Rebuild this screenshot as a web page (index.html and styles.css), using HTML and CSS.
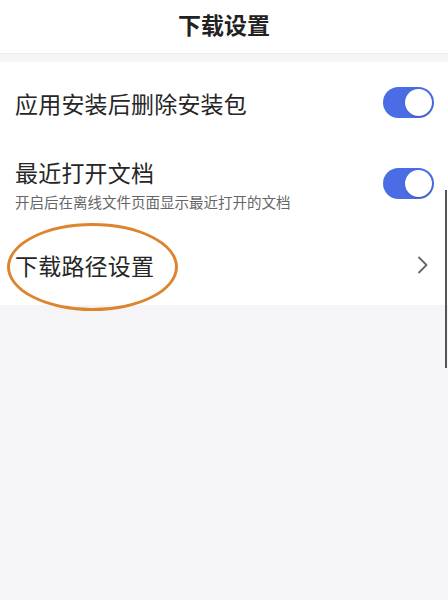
FILE: index.html
```html
<!DOCTYPE html>
<html lang="zh-CN">
<head>
<meta charset="utf-8">
<link rel="stylesheet" href="styles.css">
</head>
<body>
<header class="topbar"><h1 class="title">下载设置</h1></header>
<section class="card">
  <div class="row">
    <div class="label">应用安装后删除安装包</div>
    <div class="switch"><span class="knob"></span></div>
  </div>
  <div class="row row-two">
    <div class="texts">
      <div class="label">最近打开文档</div>
      <div class="sub">开启后在离线文件页面显示最近打开的文档</div>
    </div>
    <div class="switch"><span class="knob"></span></div>
  </div>
  <div class="row row-link">
    <div class="label">下载路径设置</div>
    <svg class="chev" width="12" height="18" viewBox="0 0 12 18"><path d="M2 1.5 L9.5 9 L2 16.5" fill="none" stroke="#666" stroke-width="1.8" stroke-linecap="round" stroke-linejoin="round"/></svg>
    <div class="circle"></div>
  </div>
</section>
<div class="scrollbar"></div>
</body>
</html>
```
FILE: styles.css
```css
html, body {
  margin: 0;
  padding: 0;
  background: #f5f5f7;
  font-family: "Noto Sans CJK SC", "Noto Sans", sans-serif;
  height: 600px;
  overflow: hidden;
}
.topbar {
  height: 54px;
  background: #fff;
  border-bottom: 1px solid #ececee;
  box-sizing: border-box;
  display: flex;
  align-items: center;
  justify-content: center;
}
.title {
  margin: 0;
  font-size: 23px;
  font-weight: 700;
  color: #222;
  line-height: 1;
  margin-top: -4px;
}
.card {
  margin-top: 8px;
  background: #fff;
  height: 243px;
  display: flex;
  flex-direction: column;
}
.row {
  position: relative;
  display: flex;
  align-items: center;
  justify-content: space-between;
  padding: 0 14px 0 15px;
  height: 81px;
}
.row-two { height: 81px; }
.row-link { flex: 1; }
.label {
  font-size: 23px;
  color: #262626;
  line-height: 28px;
  letter-spacing: 0.2px;
}
.row-two .texts { margin-top: 2px; }
.sub {
  font-size: 14.5px;
  color: #666;
  line-height: 18px;
  margin-top: 7px;
}
.switch {
  width: 51px;
  height: 31px;
  border-radius: 16px;
  background: #4a6de5;
  position: relative;
  flex: none;
}
.knob {
  position: absolute;
  right: 2px;
  top: 2px;
  width: 27px;
  height: 27px;
  border-radius: 50%;
  background: #fff;
  box-shadow: 0 1px 2px rgba(0,0,0,0.2);
}
.chev { margin-right: 5px; }
.circle {
  position: absolute;
  left: 7px;
  top: -1px;
  width: 171px;
  height: 88px;
  border: 3px solid #dd842e;
  border-radius: 50%;
  box-sizing: border-box;
}
.scrollbar {
  position: absolute;
  right: 1px;
  top: 190px;
  width: 2px;
  height: 178px;
  background: #555;
}
```
